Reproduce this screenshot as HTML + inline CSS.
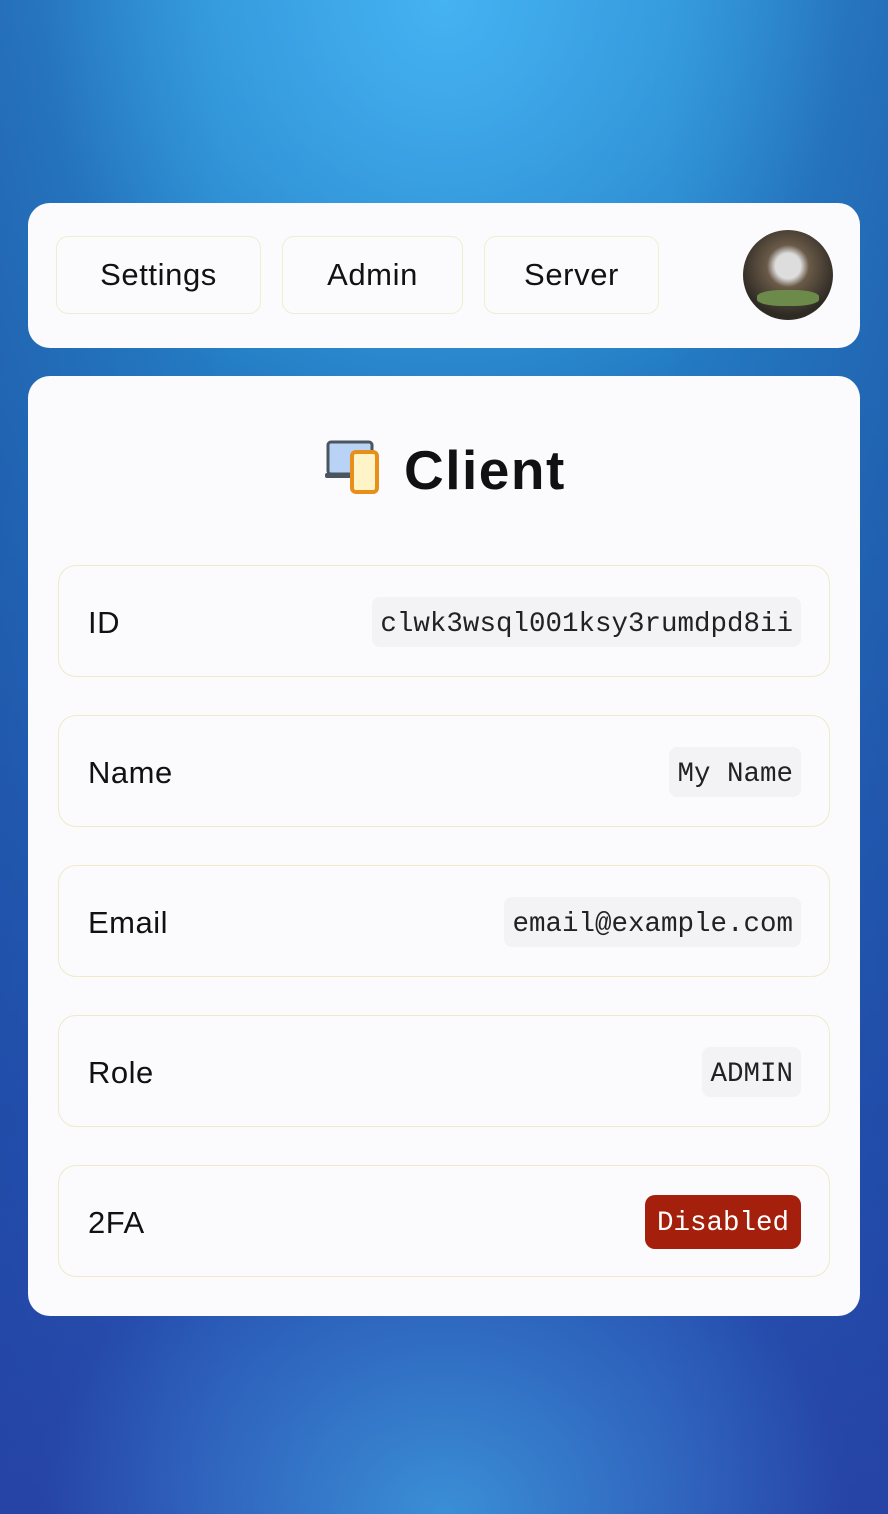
<!DOCTYPE html>
<html><head><style>
body{margin:0;width:888px;height:1514px;overflow:hidden;font-family:"Liberation Sans",sans-serif;
background:radial-gradient(ellipse 45% 30% at 50% 0%,#45b2f2 0%,rgba(60,170,230,0) 100%),radial-gradient(ellipse 45% 22% at 50% 100%,#3a8fd6 0%,rgba(58,143,214,0) 100%),linear-gradient(90deg,rgba(30,60,150,.35) 0%,rgba(0,0,0,0) 25%,rgba(0,0,0,0) 75%,rgba(30,60,150,.35) 100%),linear-gradient(180deg,#2a8ccf 0%,#2278c0 30%,#2258b4 70%,#2a47ad 100%);}
.card{position:absolute;left:28px;width:832px;background:#fbfbfe;border-radius:22px;}
.btn{position:absolute;top:33px;height:78px;border:1.5px solid #f0edd0;border-radius:12px;box-sizing:border-box;font-size:31px;letter-spacing:0.6px;color:#111;display:flex;align-items:center;justify-content:center;}
.row{position:absolute;left:30px;width:772px;height:112px;border:1.5px solid #efeac8;border-radius:18px;box-sizing:border-box;}
.lab{position:absolute;left:29px;top:39px;font-size:31px;letter-spacing:0.5px;color:#111;}
.val{position:absolute;right:28px;top:31px;height:50px;line-height:56px;overflow:hidden;padding:0 8px;background:#f3f3f6;border-radius:8px;font-family:"Liberation Mono",monospace;font-size:27.5px;color:#222;}
</style></head><body>
<div class="card" style="top:203px;height:145px">
<div class="btn" style="left:28px;width:205px">Settings</div>
<div class="btn" style="left:254px;width:181px">Admin</div>
<div class="btn" style="left:456px;width:175px">Server</div>
<div style="position:absolute;left:715px;top:27px;width:90px;height:90px;border-radius:50%;background:radial-gradient(circle at 50% 40%,#ddd 0 18%,#6a5a48 30%,#2e2a24 70%);overflow:hidden"><div style="position:absolute;left:14px;top:60px;width:62px;height:16px;background:#6c8a4a;border-radius:40%"></div></div>
</div>
<div class="card" style="top:376px;height:940px">
<svg style="position:absolute;left:296px;top:64px" width="58" height="55" viewBox="0 0 58 55">
<rect x="4" y="2" width="44" height="32" rx="3" fill="#b8d3f5" stroke="#4a5560" stroke-width="3"/>
<rect x="1" y="33" width="30" height="5" rx="2" fill="#4a5560"/>
<rect x="28" y="12" width="25" height="40" rx="4" fill="#fff4c8" stroke="#e88f1a" stroke-width="4"/>
</svg>
<div style="position:absolute;left:376px;top:62px;font-size:55px;letter-spacing:1.5px;font-weight:bold;color:#111">Client</div>
<div class="row" style="top:189px"><div class="lab">ID</div><div class="val">clwk3wsql001ksy3rumdpd8ii</div></div>
<div class="row" style="top:339px"><div class="lab">Name</div><div class="val">My Name</div></div>
<div class="row" style="top:489px"><div class="lab">Email</div><div class="val">email@example.com</div></div>
<div class="row" style="top:639px"><div class="lab">Role</div><div class="val">ADMIN</div></div>
<div class="row" style="top:789px"><div class="lab">2FA</div><div class="val" style="background:#a5200c;color:#fff;border-radius:10px;padding:0 12px;height:54px;line-height:58px;top:29px">Disabled</div></div>
</div>
</body></html>
